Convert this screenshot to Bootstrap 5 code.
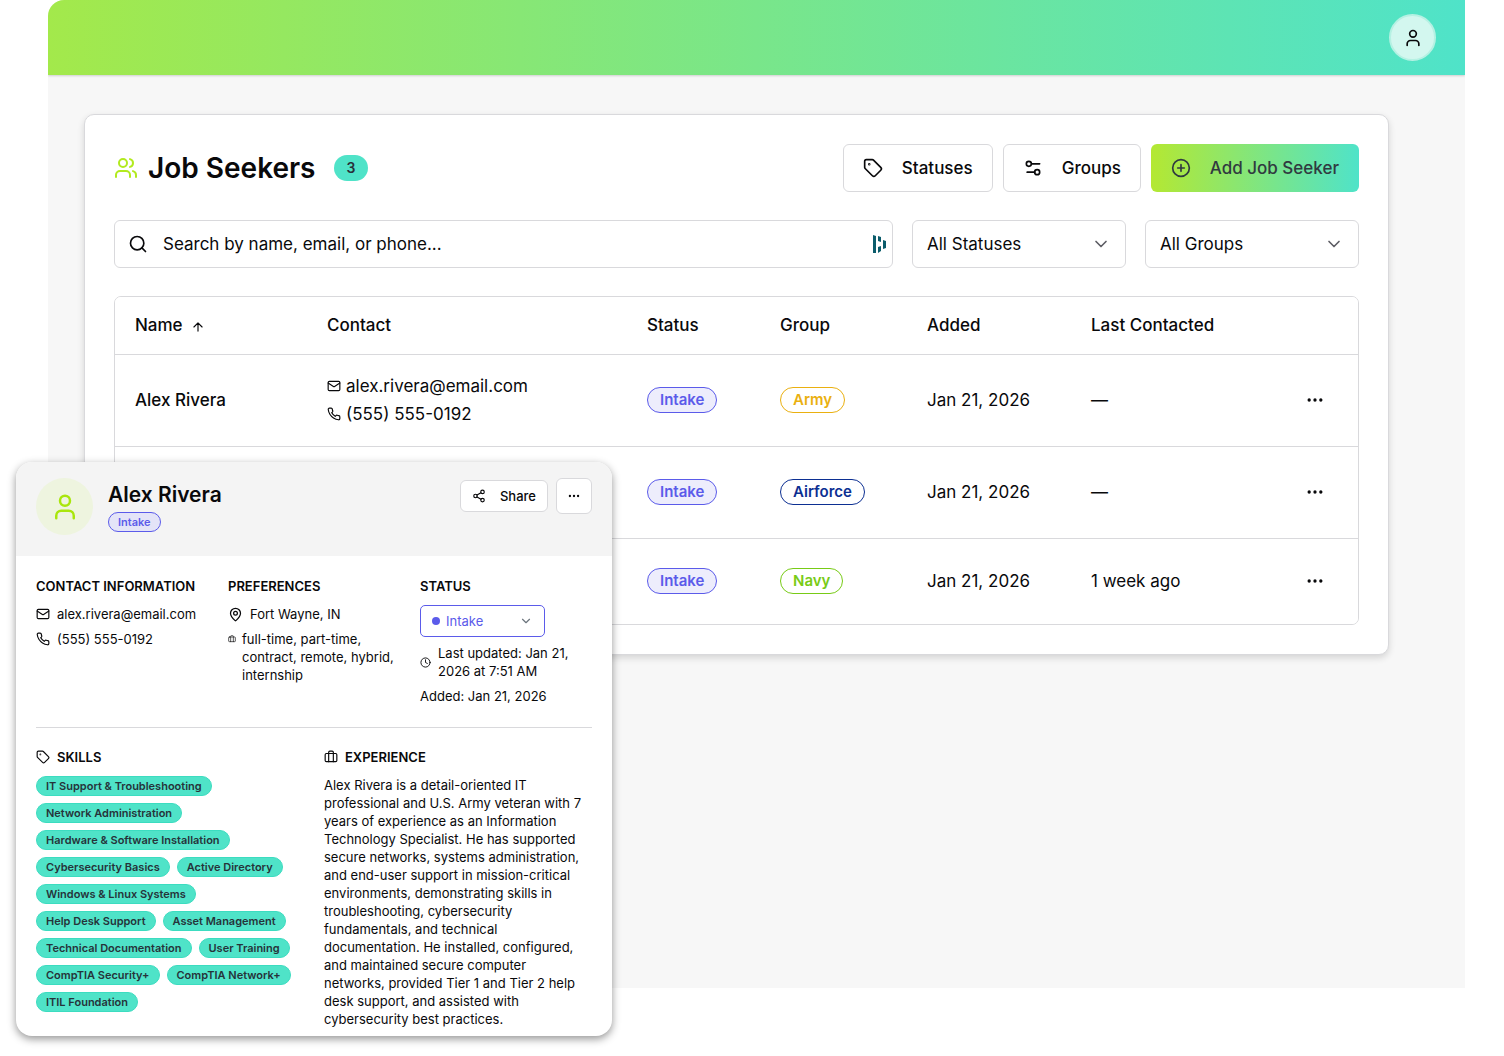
<!DOCTYPE html>
<html lang="en">
<head>
<meta charset="utf-8">
<meta name="viewport" content="width=device-width, initial-scale=1">
<title>Job Seekers</title>
<link href="https://cdn.jsdelivr.net/npm/bootstrap@5.3.0/dist/css/bootstrap.min.css" rel="stylesheet">
<style>
  :root { --line: #d9d9dc; --ink: #09090b; --lime: #b2ea1f; --teal: #4fe3c8; --indigo: #5b5bea; }
  body { font-family: Inter, sans-serif; font-size: 17px; line-height: 24px; color: var(--ink); background: #fff; }
  svg { fill: none; stroke: currentColor; stroke-width: 2; stroke-linecap: round; stroke-linejoin: round; flex: none; }
  .i-8 { width: 8px; height: 8px; } .i-11 { width: 11px; height: 11px; } .i-14 { width: 14px; height: 14px; }
  .i-15 { width: 15px; height: 15px; } .i-20 { width: 20px; height: 20px; } .i-24 { width: 24px; height: 24px; } .i-30 { width: 30px; height: 30px; }

  .stage { min-height: 1056px; }
  .shell { margin: 0 39px 0 48px; min-height: 988px; background: #f7f7f7; border-top-left-radius: 16px; overflow: hidden; }
  .topbar { height: 75px; padding: 0 29px; background: linear-gradient(90deg, #a3e94b, #4fe3c9); box-shadow: 0 1px 2px rgba(0,0,0,.16); }
  .user-btn { width: 47px; height: 47px; background: #d3f7ef; border: 2px solid #b6f1e3; color: var(--ink); }
  .workspace { padding: 39px 76px 40px 36px; }
  .panel { background: #fff; border: 1px solid var(--line); border-radius: 10px; padding: 29px; box-shadow: 0 3px 7px rgba(0,0,0,.14); }
  .people-icon { color: var(--lime); }
  .page-title { font-size: 28px; line-height: 36px; font-weight: 600; margin: 0 18px 0 10px; }
  .count-pill { background: var(--teal); color: #29303a; font-size: 14px; line-height: 26px; font-weight: 600; padding: 0 13px; }
  .tools { gap: 10px; }
  .tool-btn { height: 48px; padding: 0 19px; border: 1px solid var(--line); border-radius: 6px; background: #fff; font-size: 17px; font-weight: 500; color: var(--ink); gap: 19px; }
  .tool-btn.add { padding: 0 20px; border: 0; background: linear-gradient(90deg, #b4e832, #4fe3c9); color: #303a40; }
  .filters { gap: 19px; margin: 28px 0; }
  .field { height: 48px; border: 1px solid var(--line); border-radius: 6px; background: #fff; }
  .field input, .field select { border: 0; outline: 0; background: transparent; appearance: none; color: var(--ink); font-size: 17px; min-width: 0; }
  .field input::placeholder { color: var(--ink); opacity: 1; }
  .search-box { padding: 0 5px 0 13px; gap: 13px; }
  .pass-mark { color: #0b5c6b; }
  .filter { width: 214px; }
  .filter select { padding: 0 14px; }
  .filter svg { pointer-events: none; color: #5d5d64; }
  .drop { position: absolute; right: 14px; top: 13px; }

  .grid-box { border: 1px solid var(--line); border-radius: 7px; overflow: hidden; }
  .seekers { table-layout: fixed; --bs-table-bg: #fff; --bs-table-color: var(--ink); }
  .seekers th, .seekers td { padding: 0 20px; border-color: var(--line); font-weight: 400; white-space: nowrap; vertical-align: middle; }
  .seekers th { font-weight: 500; }
  .seekers thead tr { height: 57px; }
  .seekers tbody tr { height: 92px; }
  .seekers tbody tr:last-child { height: 86px; }
  .seekers tbody tr:last-child > * { border-bottom: 0; }
  .c-name { width: 192px; } .c-contact { width: 320px; } .c-status { width: 133px; } .c-group { width: 147px; } .c-added { width: 164px; } .c-menu { width: 87px; }
  .contact-line { line-height: 28px; gap: 5px; }
  .tag-pill { display: inline-block; border: 1px solid currentColor; border-radius: 13px; font-size: 15px; line-height: 24px; font-weight: 600; padding: 0 12px; }
  .intake { color: var(--indigo); background: #ededfc; }
  .army { color: #eab010; } .airforce { color: #0c2f92; } .navy { color: #78cb16; }
  .dots { display: block; margin: 0 auto; border: 0; background: transparent; padding: 0; color: var(--ink); }
  .dots svg { display: block; }

  .profile { position: absolute; left: 16px; top: 462px; width: 596px; background: #fff; border-radius: 16px; overflow: hidden; font-size: 13px; line-height: 18px; box-shadow: 0 3px 9px rgba(0,0,0,.42); }
  .profile-head { height: 94px; padding: 16px 20px; background: #f4f4f4; }
  .face { width: 57px; height: 57px; background: #eef4df; color: #a9e60c; }
  .who { margin-left: 15px; padding-top: 2px; gap: 2px; }
  .profile-name { font-size: 21px; line-height: 30px; font-weight: 600; }
  .small-pill { font-size: 11px; line-height: 18px; padding: 0 9px; border-radius: 10px; background: #e4e4f8; }
  .share-btn { height: 32px; padding: 0 11px; font-size: 13px; gap: 14px; }
  .more-btn { width: 36px; height: 36px; padding: 0; }
  .profile-body { padding: 21px 20px 8px; }
  .cap { font-size: 13px; line-height: 18px; font-weight: 600; margin: 0; }
  .facts { min-height: 150px; }
  .third { width: 192px; flex: none; }
  .fact { gap: 7px; }
  .types { gap: 6px; padding-right: 20px; }
  .types svg { margin-top: 5px; }
  .stack { display: flex; flex-direction: column; gap: 7px; margin-top: 10px; }
  .status-select { width: 125px; height: 32px; border: 1px solid var(--indigo); border-radius: 5px; color: var(--indigo); padding: 0 11px; gap: 6px; }
  .status-select select { border: 0; background: transparent; appearance: none; outline: 0; padding: 0; min-width: 0; font-size: 13px; color: var(--indigo); }
  .status-dot { width: 8px; height: 8px; background: var(--indigo); }
  .split { border-top: 1px solid var(--line); padding-top: 20px; }
  .skills-col { width: 288px; flex: none; padding-right: 24px; }
  .skills { gap: 7px; margin-top: 10px; }
  .skill { background: var(--teal); border: 1px solid #3cdcc0; border-radius: 10px; font-size: 11px; line-height: 18px; font-weight: 600; color: #26333a; padding: 0 9px; }
  .exp { flex: 1; min-width: 0; }
  .bio { margin-top: 10px; padding-right: 8px; }
</style>
</head>
<body>
<svg class="d-none" aria-hidden="true">
  <symbol id="user" viewBox="0 0 24 24"><path d="M19 21v-2a4 4 0 0 0-4-4H9a4 4 0 0 0-4 4v2"/><circle cx="12" cy="7" r="4"/></symbol>
  <symbol id="users" viewBox="0 0 24 24"><path d="M16 21v-2a4 4 0 0 0-4-4H6a4 4 0 0 0-4 4v2"/><circle cx="9" cy="7" r="4"/><path d="M22 21v-2a4 4 0 0 0-3-3.87M16 3.13a4 4 0 0 1 0 7.75"/></symbol>
  <symbol id="tag" viewBox="0 0 24 24"><path d="M12.586 2.586A2 2 0 0 0 11.172 2H4a2 2 0 0 0-2 2v7.172a2 2 0 0 0 .586 1.414l8.704 8.704a2.426 2.426 0 0 0 3.42 0l6.58-6.58a2.426 2.426 0 0 0 0-3.42z"/><circle cx="7.500" cy="7.500" r=".5"/></symbol>
  <symbol id="sliders" viewBox="0 0 24 24"><path d="M20 7h-9M14 17H5"/><circle cx="17" cy="17" r="3"/><circle cx="7" cy="7" r="3"/></symbol>
  <symbol id="plus" viewBox="0 0 24 24"><circle cx="12" cy="12" r="10"/><path d="M8 12h8M12 8v8"/></symbol>
  <symbol id="search" viewBox="0 0 24 24"><circle cx="11" cy="11" r="8"/><path d="m21 21-4.300-4.300"/></symbol>
  <symbol id="chevron" viewBox="0 0 24 24"><path d="m6 9 6 6 6-6"/></symbol>
  <symbol id="up" viewBox="0 0 24 24"><path d="m5 12 7-7 7 7M12 19V5"/></symbol>
  <symbol id="mail" viewBox="0 0 24 24"><rect x="2" y="4" width="20" height="16" rx="2"/><path d="m22 7-8.970 5.700a1.940 1.940 0 0 1-2.060 0L2 7"/></symbol>
  <symbol id="phone" viewBox="0 0 24 24"><path d="M22 16.920v3a2 2 0 0 1-2.180 2 19.790 19.790 0 0 1-8.630-3.070 19.500 19.500 0 0 1-6-6 19.790 19.790 0 0 1-3.070-8.670A2 2 0 0 1 4.110 2h3a2 2 0 0 1 2 1.720 12.840 12.840 0 0 0 .7 2.810 2 2 0 0 1-.45 2.110L8.090 9.910a16 16 0 0 0 6 6l1.270-1.270a2 2 0 0 1 2.110-.45 12.840 12.840 0 0 0 2.810.7A2 2 0 0 1 22 16.920z"/></symbol>
  <symbol id="pin" viewBox="0 0 24 24"><path d="M20 10c0 4.993-5.539 10.193-7.399 11.799a1 1 0 0 1-1.202 0C9.539 20.193 4 14.993 4 10a8 8 0 0 1 16 0"/><circle cx="12" cy="10" r="3"/></symbol>
  <symbol id="case" viewBox="0 0 24 24"><path d="M16 20V4a2 2 0 0 0-2-2h-4a2 2 0 0 0-2 2v16"/><rect x="2" y="6" width="20" height="14" rx="2"/></symbol>
  <symbol id="clock" viewBox="0 0 24 24"><circle cx="12" cy="12" r="10"/><path d="M12 6v6l4 2"/></symbol>
  <symbol id="share" viewBox="0 0 24 24"><circle cx="18" cy="5" r="3"/><circle cx="6" cy="12" r="3"/><circle cx="18" cy="19" r="3"/><path d="m8.590 13.510 6.830 3.980M15.410 6.510l-6.820 3.980"/></symbol>
  <symbol id="more" viewBox="0 0 24 24"><g fill="currentColor"><circle cx="12" cy="12" r="1"/><circle cx="19" cy="12" r="1"/><circle cx="5" cy="12" r="1"/></g></symbol>
</svg>
<div class="stage position-relative">
  <div class="shell">
    <header class="topbar d-flex align-items-center justify-content-end position-relative">
      <button class="user-btn btn rounded-circle p-0 d-flex align-items-center justify-content-center" type="button" aria-label="Account"><svg class="i-20"><use href="#user"/></svg></button>
    </header>
    <main class="workspace">
      <section class="panel">
        <div class="d-flex align-items-center">
          <svg class="i-24 people-icon"><use href="#users"/></svg>
          <h1 class="page-title">Job Seekers</h1>
          <span class="count-pill rounded-pill">3</span>
          <div class="d-flex ms-auto tools">
            <button class="tool-btn d-flex align-items-center" type="button"><svg class="i-20"><use href="#tag"/></svg>Statuses</button>
            <button class="tool-btn d-flex align-items-center" type="button"><svg class="i-20"><use href="#sliders"/></svg>Groups</button>
            <button class="tool-btn add d-flex align-items-center" type="button"><svg class="i-20"><use href="#plus"/></svg>Add Job Seeker</button>
          </div>
        </div>
        <div class="d-flex filters">
          <div class="field d-flex align-items-center flex-grow-1 search-box">
            <svg class="i-20"><use href="#search"/></svg>
            <input class="flex-grow-1" type="text" aria-label="Search job seekers" placeholder="Search by name, email, or phone...">
            <svg class="pass-mark" width="14" height="18" viewBox="0 0 14 18"><path stroke="none" fill="currentColor" d="M0 0l3 1v17H0zM5 1l3 1v5l-3-1zM5 12l3-1v5l-3 2zM10 5l3 1v7l-3 1z"/></svg>
          </div>
          <div class="field filter d-flex position-relative">
            <select class="w-100" aria-label="Status filter"><option>All Statuses</option></select>
            <svg class="i-20 drop"><use href="#chevron"/></svg>
          </div>
          <div class="field filter d-flex position-relative">
            <select class="w-100" aria-label="Group filter"><option>All Groups</option></select>
            <svg class="i-20 drop"><use href="#chevron"/></svg>
          </div>
        </div>
        <div class="grid-box">
          <table class="table seekers mb-0">
            <colgroup><col class="c-name"><col class="c-contact"><col class="c-status"><col class="c-group"><col class="c-added"><col><col class="c-menu"></colgroup>
            <thead><tr><th scope="col">Name <svg class="i-14 ms-1"><use href="#up"/></svg></th><th scope="col">Contact</th><th scope="col">Status</th><th scope="col">Group</th><th scope="col">Added</th><th scope="col">Last Contacted</th><th scope="col"></th></tr></thead>
            <tbody>
              <tr><th scope="row">Alex Rivera</th>
                <td><div class="contact-line d-flex align-items-center"><svg class="i-14"><use href="#mail"/></svg>alex.rivera@email.com</div><div class="contact-line d-flex align-items-center"><svg class="i-14"><use href="#phone"/></svg>(555) 555-0192</div></td>
                <td><span class="tag-pill intake">Intake</span></td><td><span class="tag-pill army">Army</span></td><td>Jan 21, 2026</td><td>—</td>
                <td><button class="dots" type="button" aria-label="Actions"><svg class="i-20"><use href="#more"/></svg></button></td></tr>
              <tr><th scope="row"></th><td></td>
                <td><span class="tag-pill intake">Intake</span></td><td><span class="tag-pill airforce">Airforce</span></td><td>Jan 21, 2026</td><td>—</td>
                <td><button class="dots" type="button" aria-label="Actions"><svg class="i-20"><use href="#more"/></svg></button></td></tr>
              <tr><th scope="row"></th><td></td>
                <td><span class="tag-pill intake">Intake</span></td><td><span class="tag-pill navy">Navy</span></td><td>Jan 21, 2026</td><td>1 week ago</td>
                <td><button class="dots" type="button" aria-label="Actions"><svg class="i-20"><use href="#more"/></svg></button></td></tr>
            </tbody>
          </table>
        </div>
      </section>
    </main>
  </div>

  <aside class="profile">
    <header class="profile-head d-flex align-items-start">
      <span class="face rounded-circle d-flex align-items-center justify-content-center"><svg class="i-30"><use href="#user"/></svg></span>
      <div class="who d-flex flex-column align-items-start">
        <h2 class="profile-name mb-0">Alex Rivera</h2>
        <span class="tag-pill intake small-pill">Intake</span>
      </div>
      <div class="d-flex align-items-center ms-auto gap-2">
        <button class="tool-btn share-btn d-flex align-items-center" type="button"><svg class="i-14"><use href="#share"/></svg>Share</button>
        <button class="tool-btn more-btn d-flex align-items-center justify-content-center" type="button" aria-label="More"><svg class="i-14"><use href="#more"/></svg></button>
      </div>
    </header>
    <div class="profile-body">
      <div class="d-flex facts">
        <section class="third">
          <h3 class="cap">CONTACT INFORMATION</h3>
          <div class="stack">
            <div class="d-flex align-items-center fact"><svg class="i-14"><use href="#mail"/></svg>alex.rivera@email.com</div>
            <div class="d-flex align-items-center fact"><svg class="i-14"><use href="#phone"/></svg>(555) 555-0192</div>
          </div>
        </section>
        <section class="third">
          <h3 class="cap">PREFERENCES</h3>
          <div class="stack">
            <div class="d-flex align-items-center fact"><svg class="i-15"><use href="#pin"/></svg>Fort Wayne, IN</div>
            <div class="d-flex align-items-start types"><svg class="i-8"><use href="#case"/></svg><span>full-time, part-time, contract, remote, hybrid, internship</span></div>
          </div>
        </section>
        <section class="flex-grow-1">
          <h3 class="cap">STATUS</h3>
          <div class="stack">
            <div class="status-select d-flex align-items-center">
              <span class="status-dot rounded-circle"></span>
              <select aria-label="Status" class="flex-grow-1"><option>Intake</option></select>
              <svg class="i-14 text-secondary"><use href="#chevron"/></svg>
            </div>
            <div class="d-flex align-items-center fact"><svg class="i-11"><use href="#clock"/></svg><span>Last updated: Jan 21, 2026 at 7:51 AM</span></div>
            <div>Added: Jan 21, 2026</div>
          </div>
        </section>
      </div>
      <div class="split d-flex">
        <section class="skills-col">
          <h3 class="cap d-flex align-items-center fact"><svg class="i-14"><use href="#tag"/></svg>SKILLS</h3>
          <div class="d-flex flex-wrap skills">
            <span class="skill">IT Support &amp; Troubleshooting</span>
            <span class="skill">Network Administration</span>
            <span class="skill">Hardware &amp; Software Installation</span>
            <span class="skill">Cybersecurity Basics</span>
            <span class="skill">Active Directory</span>
            <span class="skill">Windows &amp; Linux Systems</span>
            <span class="skill">Help Desk Support</span>
            <span class="skill">Asset Management</span>
            <span class="skill">Technical Documentation</span>
            <span class="skill">User Training</span>
            <span class="skill">CompTIA Security+</span>
            <span class="skill">CompTIA Network+</span>
            <span class="skill">ITIL Foundation</span>
          </div>
        </section>
        <section class="exp">
          <h3 class="cap d-flex align-items-center fact"><svg class="i-14"><use href="#case"/></svg>EXPERIENCE</h3>
          <p class="bio mb-0">Alex Rivera is a detail-oriented IT professional and U.S. Army veteran with 7 years of experience as an Information Technology Specialist. He has supported secure networks, systems administration, and end-user support in mission-critical environments, demonstrating skills in troubleshooting, cybersecurity fundamentals, and technical documentation. He installed, configured, and maintained secure computer networks, provided Tier 1 and Tier 2 help desk support, and assisted with cybersecurity best practices.</p>
        </section>
      </div>
    </div>
  </aside>
</div>
<script src="https://cdn.jsdelivr.net/npm/bootstrap@5.3.0/dist/js/bootstrap.bundle.min.js"></script>
</body>
</html>
